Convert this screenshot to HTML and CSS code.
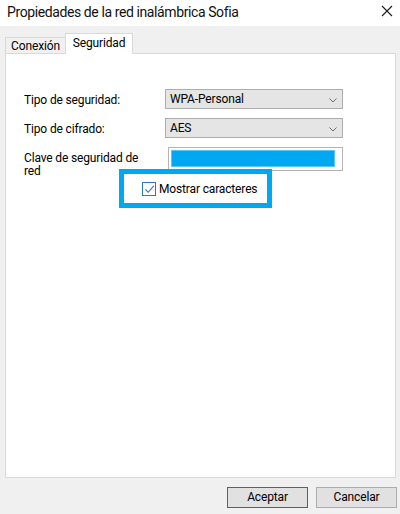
FILE: index.html
```html
<!DOCTYPE html>
<html lang="es">
<head>
<meta charset="utf-8">
<title>Propiedades de la red inalámbrica Sofia</title>
<link rel="stylesheet" href="styles.css">
</head>
<body>
<div class="window">
  <div class="titlebar">
    <span class="title">Propiedades de la red inalámbrica Sofia</span>
    <svg class="close" width="12" height="12" viewBox="0 0 12 12"><path d="M1 1 L11 11 M11 1 L1 11" stroke="#1a1a1a" stroke-width="1.1" fill="none"/></svg>
  </div>
  <div class="content">
    <div class="tabs">
      <div class="tab">Conexión</div>
      <div class="tab active">Seguridad</div>
    </div>
    <div class="panel">
      <div class="form">
        <div class="lbl">Tipo de seguridad:</div>
        <div class="select"><span>WPA-Personal</span><svg class="chev" width="8" height="5" viewBox="0 0 8 5"><path d="M0.5 0.5 L4 4 L7.5 0.5" stroke="#6d6d6d" stroke-width="1" fill="none"/></svg></div>
        <div class="lbl">Tipo de cifrado:</div>
        <div class="select"><span>AES</span><svg class="chev" width="8" height="5" viewBox="0 0 8 5"><path d="M0.5 0.5 L4 4 L7.5 0.5" stroke="#6d6d6d" stroke-width="1" fill="none"/></svg></div>
        <div class="lbl lbl-top">Clave de seguridad de red</div>
        <div class="textbox"><div class="masked"></div></div>
      </div>
      <div class="check-row">
        <span class="checkbox"><svg width="11" height="11" viewBox="0 0 11 11"><path d="M1.5 5.5 L4.2 8.3 L9.8 1.8" stroke="#2a78c0" stroke-width="1.1" fill="none"/></svg></span>
        <span class="check-label">Mostrar caracteres</span>
        <div class="highlight"></div>
      </div>
    </div>
    <div class="footer">
      <button class="btn default">Aceptar</button>
      <button class="btn">Cancelar</button>
    </div>
  </div>
</div>
</body>
</html>
```
FILE: styles.css
```css
* { box-sizing: border-box; }
html, body { margin: 0; padding: 0; }
body {
  width: 400px;
  height: 514px;
  overflow: hidden;
  font-family: Roboto, "Noto Sans", sans-serif;
  font-size: 12px;
  letter-spacing: -0.15px;
  color: #000;
  background: #f0f0f0;
}
.window { width: 400px; height: 514px; display: flex; flex-direction: column; }
.titlebar {
  height: 26px;
  background: #fff;
  display: flex;
  align-items: center;
  justify-content: space-between;
  padding: 0 7px 0 7px;
}
.title { font-size: 14px; letter-spacing: -0.4px; color: #111; line-height: 20px; margin-top: -3px; }
.close { margin-top: -4px; }
.content { flex: 1; display: flex; flex-direction: column; }
.tabs {
  display: flex;
  align-items: flex-end;
  padding-left: 5px;
  margin-top: 7px;
  height: 21px;
  margin-bottom: -1px;
  position: relative;
  z-index: 1;
}
.tab {
  height: 16px;
  width: 60px;
  margin-bottom: 1px;
  border: 1px solid #d9d9d9;
  border-bottom: none;
  border-right: none;
  background: #f0f0f0;
  display: flex;
  align-items: center;
  justify-content: center;
  line-height: 14px;
}
.tab.active {
  height: 21px;
  width: 68px;
  margin-bottom: 0;
  border-right: 1px solid #d9d9d9;
  background: #fff;
  padding-bottom: 3px;
}
.panel {
  margin: 0 4px 0 5px;
  height: 425px;
  background: #fff;
  border: 1px solid #d9d9d9;
  padding: 35px 0 0 18px;
}
.form {
  display: grid;
  grid-template-columns: 141px 178px;
  grid-template-rows: 20px 20px 24px;
  row-gap: 9px;
  align-items: center;
}
.lbl { line-height: 14px; padding-top: 1px; }
.lbl-top { align-self: start; padding-top: 5px; width: 122px; line-height: 13px; }
.select {
  height: 20px;
  background: #e5e5e5;
  border: 1px solid #adadad;
  display: flex;
  align-items: center;
  justify-content: space-between;
  padding: 0 5px 0 4px;
}
.chev { margin-top: 2px; }
.textbox {
  height: 24px;
  margin-left: 3px;
  width: 175px;
  border: 1px solid #b4b4b4;
  background: #fff;
  padding: 2px 7px 3px 2px;
}
.masked { height: 17px; background: #00a7f1; border: 1px solid #5cc6f5; }
.check-row {
  position: relative;
  display: inline-flex;
  align-items: center;
  margin: 11px 0 0 118px;
  height: 14px;
}
.checkbox {
  width: 14px;
  height: 14px;
  border: 1px solid #2a78c0;
  display: flex;
  align-items: center;
  justify-content: center;
  background: #fff;
}
.check-label { margin-left: 3px; line-height: 14px; }
.highlight {
  position: absolute;
  left: -23px;
  top: -13px;
  width: 153px;
  height: 39px;
  border: 5px solid #00a7f1;
  pointer-events: none;
}
.footer {
  display: flex;
  justify-content: flex-end;
  gap: 8px;
  padding: 9px 3px 0 0;
}
.btn {
  width: 81px;
  height: 21px;
  background: #e1e1e1;
  border: 1px solid #adadad;
  font-family: inherit;
  font-size: 12px;
  letter-spacing: -0.15px;
  color: #000;
  padding: 0;
  line-height: 17px;
}
.btn.default { border-color: #0078d7; }
```
